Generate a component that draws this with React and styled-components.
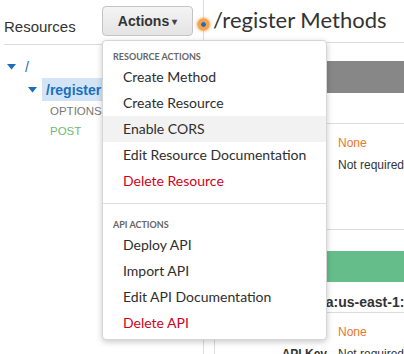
import React from 'react';
import styled, { createGlobalStyle } from 'styled-components';

const GlobalStyle = createGlobalStyle`
    html, body {
        margin: 0;
        padding: 0;
        background: #fff;
    }
    body {
        font-family: "Liberation Sans", Arial, sans-serif;
        width: 404px;
        height: 354px;
        overflow: hidden;
    }
`;

const resourceActions = [
    { label: 'Create Method' },
    { label: 'Create Resource' },
    { label: 'Enable CORS', active: true },
    { label: 'Edit Resource Documentation' },
    { label: 'Delete Resource', danger: true },
];

const apiActions = [
    { label: 'Deploy API' },
    { label: 'Import API' },
    { label: 'Edit API Documentation' },
    { label: 'Delete API', danger: true },
];

const Caret = ({ color = '#1a6ec0' }) => (
    <svg width="9" height="6" viewBox="0 0 9 6">
        <path d="M0 0 L9 0 L4.5 5.5 Z" fill={color} />
    </svg>
);

export default function App() {
    return (
        <Page>
            <GlobalStyle />
            <LeftPanel>
                <Header>
                    <PanelTitle>Resources</PanelTitle>
                    <ActionsWrap>
                        <ActionsButton>
                            Actions <small>▾</small>
                        </ActionsButton>
                        <Menu>
                            <MenuHeader>Resource Actions</MenuHeader>
                            {resourceActions.map((a) => (
                                <MenuItem key={a.label} active={a.active} danger={a.danger}>
                                    {a.label}
                                </MenuItem>
                            ))}
                            <MenuDivider />
                            <MenuHeader gap>API Actions</MenuHeader>
                            {apiActions.map((a) => (
                                <MenuItem key={a.label} danger={a.danger}>
                                    {a.label}
                                </MenuItem>
                            ))}
                        </Menu>
                    </ActionsWrap>
                </Header>
                <Tree>
                    <TreeRow depth={0}>
                        <Caret />
                        <ResourceName>/</ResourceName>
                    </TreeRow>
                    <TreeRow depth={1}>
                        <Caret />
                        <ResourceName selected>/register</ResourceName>
                    </TreeRow>
                    <MethodRow>OPTIONS</MethodRow>
                    <MethodRow post>POST</MethodRow>
                </Tree>
            </LeftPanel>

            <RightPanel>
                <Beacon />
                <TitleRow>/register Methods</TitleRow>
                <Diagram>
                    <Section>
                        <MethodBar color="#878787" />
                        <BarGap />
                        <Rows>
                            <Row>
                                <Label>Auth</Label>
                                <Value warn>None</Value>
                            </Row>
                            <Row>
                                <Label>API Key</Label>
                                <Value>Not required</Value>
                            </Row>
                        </Rows>
                    </Section>
                    <Section>
                        <MethodBar color="#65be89" short />
                        <Arn>arn:aws:lambda:us-east-1:123456789012</Arn>
                        <Rows>
                            <Row>
                                <Label>Auth</Label>
                                <Value warn>None</Value>
                            </Row>
                            <Row>
                                <Label>API Key</Label>
                                <Value>Not required</Value>
                            </Row>
                        </Rows>
                    </Section>
                </Diagram>
            </RightPanel>
        </Page>
    );
}

const Page = styled.div`
    display: flex;
    width: 404px;
    height: 354px;
    overflow: hidden;
`;

const LeftPanel = styled.div`
    width: 203px;
    flex-shrink: 0;
`;

const Header = styled.div`
    display: flex;
    align-items: center;
    justify-content: space-between;
    height: 44px;
    margin-left: 4px;
    padding-right: 10px;
    border-bottom: 1px solid #dcdcdc;
`;

const PanelTitle = styled.div`
    font-size: 15px;
    color: #333;
    padding-top: 8px;
`;

const ActionsWrap = styled.div`
    position: relative;
    margin-bottom: 2px;
`;

const ActionsButton = styled.div`
    display: flex;
    align-items: center;
    justify-content: center;
    gap: 3px;
    box-sizing: border-box;
    width: 91px;
    height: 30px;
    border: 1px solid #c4c4c4;
    border-radius: 4px;
    background: linear-gradient(#f4f4f4, #e4e4e4);
    font-weight: bold;
    font-size: 14px;
    color: #333;
    small {
        font-size: 10px;
        color: #444;
    }
`;

const Menu = styled.div`
    position: absolute;
    top: calc(100% + 4px);
    left: 0;
    z-index: 10;
    box-sizing: border-box;
    width: 225px;
    padding: 9px 0 3px;
    background: #fff;
    border: 1px solid #d6d6d6;
    border-radius: 4px;
    box-shadow: 0 2px 6px rgba(0, 0, 0, 0.22);
    font-family: Lato, "Liberation Sans", sans-serif;
`;

const MenuHeader = styled.div`
    height: 14px;
    line-height: 14px;
    margin-top: ${(p) => (p.gap ? '14px' : '0')};
    padding-left: 10px;
    font-size: 9px;
    font-weight: bold;
    text-transform: uppercase;
    color: #666;
`;

const MenuItem = styled.div`
    height: 26px;
    line-height: 26px;
    padding-left: 20px;
    font-size: 14px;
    color: ${(p) => (p.danger ? '#d0021b' : '#2e2e2e')};
    background: ${(p) => (p.active ? '#f2f2f2' : 'transparent')};
`;

const MenuDivider = styled.div`
    height: 1px;
    margin-top: 9px;
    background: #dedede;
`;

const Tree = styled.div`
    padding-top: 10px;
`;

const TreeRow = styled.div`
    display: flex;
    align-items: center;
    height: 23px;
    gap: 5px;
    padding-left: ${(p) => 7 + p.depth * 21}px;
`;

const ResourceName = styled.span`
    display: flex;
    align-items: center;
    height: 23px;
    padding: 0 ${(p) => (p.selected ? '40px' : '4px')} 0 4px;
    font-size: 14px;
    font-weight: ${(p) => (p.selected ? 'bold' : 'normal')};
    color: #1a6ec0;
    background: ${(p) => (p.selected ? '#d3e4f6' : 'transparent')};
`;

const MethodRow = styled.div`
    height: 20px;
    line-height: 20px;
    padding-left: 50px;
    font-size: 11.5px;
    color: ${(p) => (p.post ? '#70bb6c' : '#777')};
`;

const RightPanel = styled.div`
    position: relative;
    flex: 1;
    border-left: 1px solid #dcdcdc;
`;

const Beacon = styled.div`
    position: absolute;
    left: -7px;
    top: 18px;
    width: 13px;
    height: 13px;
    border-radius: 50%;
    background: radial-gradient(circle, #1a6ec0 0 2px, #f6a24c 2.6px 5px, #f3b06e 6.5px);
    box-shadow: 0 0 2px 1px rgba(245, 160, 80, 0.5);
`;

const TitleRow = styled.div`
    display: flex;
    align-items: center;
    height: 43px;
    padding: 0 0 4px 9px;
    box-sizing: border-box;
    border-bottom: 1px solid #dcdcdc;
    font-family: Lato, "Liberation Sans", sans-serif;
    font-size: 22px;
    color: #333;
    white-space: nowrap;
`;

const Diagram = styled.div`
    margin-left: 10px;
    border-left: 1px solid #dcdcdc;
`;

const Section = styled.div`
    padding-top: 21px;
    &:first-child {
        padding-top: 18px;
    }
    & + & {
        border-top: 1px solid #dcdcdc;
    }
`;

const MethodBar = styled.div`
    height: ${(p) => (p.short ? '31px' : '32px')};
    background: ${(p) => p.color};
`;

const BarGap = styled.div`
    height: 30px;
`;

const Arn = styled.div`
    height: 16px;
    line-height: 16px;
    padding: 12px 0 2px 12px;
    font-size: 14px;
    font-weight: bold;
    color: #333;
    white-space: nowrap;
`;

const Rows = styled.div`
    padding: 8px 0 53px;
    border-top: 1px solid #dcdcdc;
`;

const Row = styled.div`
    display: grid;
    grid-template-columns: 112px 1fr;
    column-gap: 11px;
    height: 22px;
    line-height: 22px;
    font-size: 12px;
    white-space: nowrap;
`;

const Label = styled.span`
    text-align: right;
    font-weight: bold;
    color: #333;
`;

const Value = styled.span`
    color: ${(p) => (p.warn ? '#e8782a' : '#333')};
`;
